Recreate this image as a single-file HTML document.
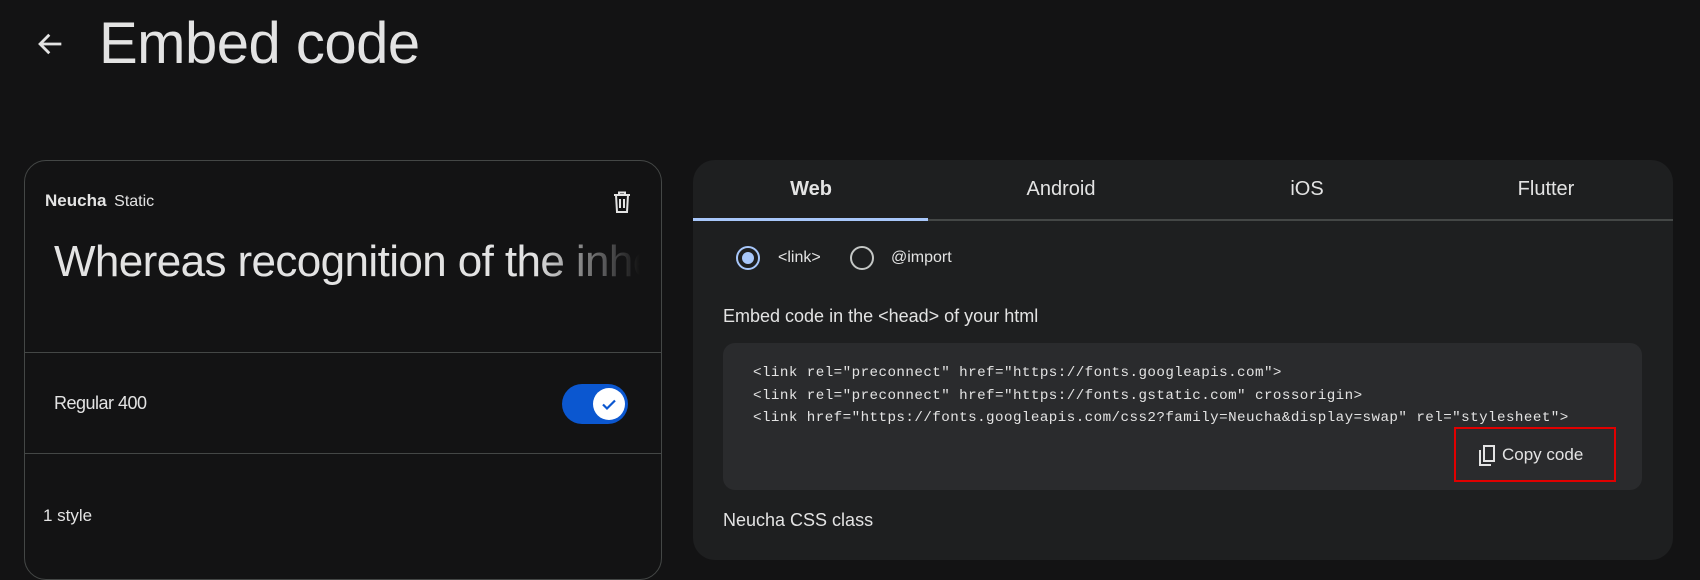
<!DOCTYPE html>
<html><head><meta charset="utf-8"><style>
*{box-sizing:border-box;margin:0;padding:0}
body{width:1700px;height:520px;overflow:hidden;background:#131314;color:#e3e3e3;font-family:"Liberation Sans",sans-serif;position:relative}
.abs{position:absolute}
.title{left:99px;top:10px;font-size:58px;color:#e3e3e3;letter-spacing:-0.5px}
.card{left:24px;top:160px;width:638px;height:420px;border:1px solid #444746;border-radius:22px}
.hr{position:absolute;left:0;right:0;height:1px;background:#444746}
.panel{left:693px;top:160px;width:980px;height:400px;background:#1e1f20;border-radius:22px}
.tab{position:absolute;top:18px;font-size:20px;transform:translateX(-50%);color:#e3e3e3}
.code{position:absolute;left:30px;top:183px;width:919px;height:147px;background:#2a2b2d;border-radius:12px}
.code pre{position:absolute;left:30px;top:19px;font-family:"Liberation Mono",monospace;font-size:14.2px;line-height:22.5px;color:#e3e3e3;letter-spacing:0.45px}
.radio{position:absolute;width:24px;height:24px;border-radius:50%;border:2px solid #c4c7c5}
</style></head><body>
<svg class="abs" style="left:33px;top:27px" width="34" height="34" viewBox="0 0 24 24"><path d="M20 12H5M11.5 5.5L5 12l6.5 6.5" fill="none" stroke="#e3e3e3" stroke-width="2"/></svg>
<div class="abs title">Embed code</div>

<div class="abs card">
  <div class="abs" style="left:20px;top:30px;font-size:17px;font-weight:bold;color:#e3e3e3">Neucha <span style="font-weight:normal;font-size:16px;margin-left:3px">Static</span></div>
  <svg class="abs" style="left:586px;top:29px" width="22" height="24" viewBox="0 0 22 24"><path d="M3 5h16M8 5V2.5h6V5M5 5l1 17h10l1-17M9 9v9M13 9v9" fill="none" stroke="#e3e3e3" stroke-width="2"/></svg>
  <div class="abs" style="left:29px;top:76px;width:586px;overflow:hidden;white-space:nowrap;font-size:44px;letter-spacing:-0.6px;color:#e3e3e3;-webkit-mask-image:linear-gradient(90deg,#000 82%,transparent 100%)">Whereas recognition of the inherent</div>
  <div class="hr" style="top:191px"></div>
  <div class="abs" style="left:29px;top:232px;font-size:18px;color:#e3e3e3;letter-spacing:-0.5px">Regular 400</div>
  <div class="abs" style="left:537px;top:223px;width:66px;height:40px;border-radius:20px;background:#0b57d0"></div>
  <div class="abs" style="left:568px;top:227px;width:32px;height:32px;border-radius:50%;background:#fff"></div>
  <svg class="abs" style="left:575px;top:234px" width="18" height="18" viewBox="0 0 18 18"><path d="M3 9.5l4 4 8-8" fill="none" stroke="#0b57d0" stroke-width="2.2"/></svg>
  <div class="hr" style="top:292px"></div>
  <div class="abs" style="left:18px;top:345px;font-size:17px">1 style</div>
</div>

<div class="abs panel">
  <div class="tab" style="left:118px;font-weight:bold">Web</div>
  <div class="tab" style="left:368px">Android</div>
  <div class="tab" style="left:614px">iOS</div>
  <div class="tab" style="left:853px">Flutter</div>
  <div class="abs" style="left:0;right:0;top:59px;height:2px;background:#444746"></div>
  <div class="abs" style="left:0;width:235px;top:58px;height:3px;background:#a8c7fa"></div>
  <div class="radio" style="left:43px;top:86px;border-color:#a8c7fa"><div style="position:absolute;left:4px;top:4px;width:12px;height:12px;border-radius:50%;background:#a8c7fa"></div></div>
  <div class="abs" style="left:85px;top:89px;font-size:16px">&lt;link&gt;</div>
  <div class="radio" style="left:157px;top:86px"></div>
  <div class="abs" style="left:198px;top:89px;font-size:16px">@import</div>
  <div class="abs" style="left:30px;top:146px;font-size:18px">Embed code in the &lt;head&gt; of your html</div>
  <div class="code">
<pre>&lt;link rel="preconnect" href="https://fonts.googleapis.com"&gt;
&lt;link rel="preconnect" href="https://fonts.gstatic.com" crossorigin&gt;
&lt;link href="https://fonts.googleapis.com/css2?family=Neucha&amp;display=swap" rel="stylesheet"&gt;</pre>
  </div>
  <div class="abs" style="left:761px;top:267px;width:162px;height:55px;border:2px solid #e00000"></div>
  <svg class="abs" style="left:784px;top:284px" width="22" height="24" viewBox="0 0 22 24"><path d="M3 6v15h11" fill="none" stroke="#e3e3e3" stroke-width="2"/><rect x="7" y="2" width="10" height="15" fill="none" stroke="#e3e3e3" stroke-width="2"/></svg>
  <div class="abs" style="left:809px;top:285px;font-size:17px">Copy code</div>
  <div class="abs" style="left:30px;top:350px;font-size:18px">Neucha CSS class</div>
</div>
</body></html>
